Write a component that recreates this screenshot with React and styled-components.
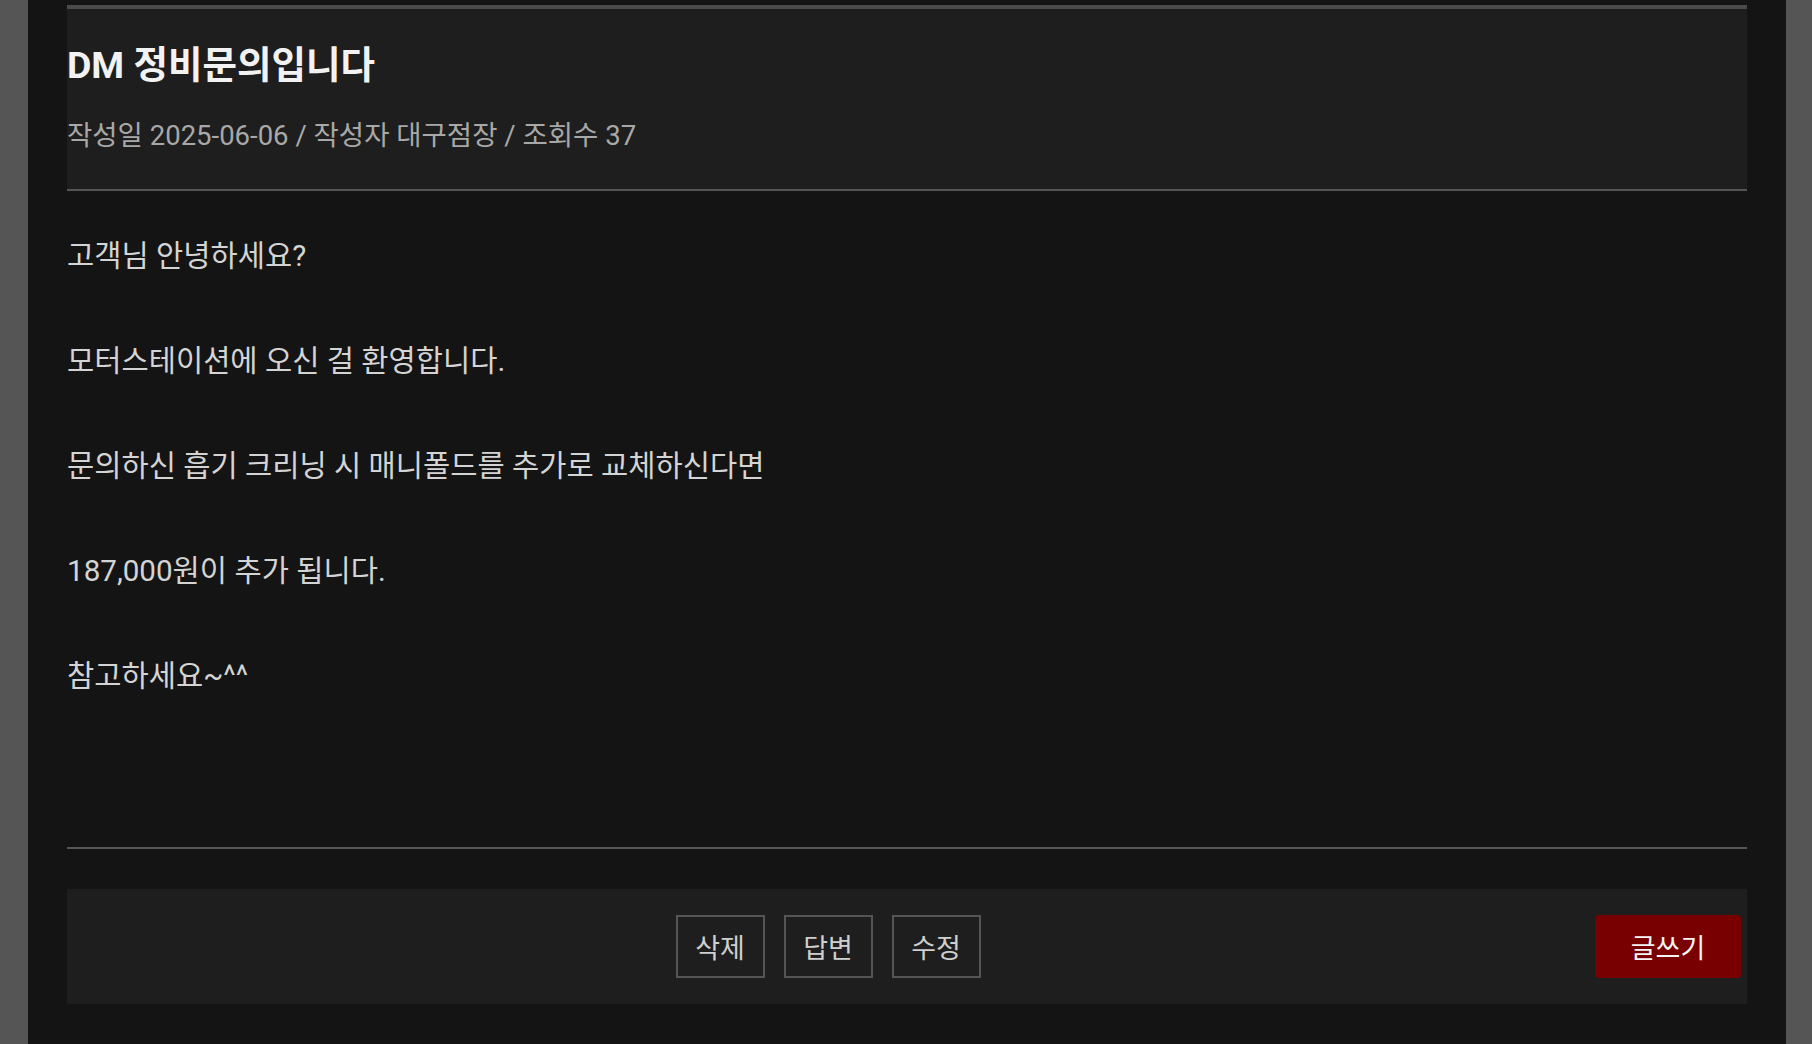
import React from "react";
import styled, { createGlobalStyle } from "styled-components";

const GlobalStyle = createGlobalStyle`
  html, body {
    margin: 0;
    padding: 0;
    background: #555555;
    height: 100%;
    overflow: hidden;
  }
  body {
    font-family: Roboto, "Noto Sans CJK KR", "Noto Sans", sans-serif;
  }
  * { box-sizing: border-box; }
`;

const Page = styled.div`
  margin: 0 26px 0 28px;
  min-height: 1044px;
  background: #141414;
  padding: 5px 39px 0 39px;
`;

const Header = styled.header`
  background: #1e1e1e;
  border-top: 4px solid #4a4a4c;
  border-bottom: 2px solid #555555;
  height: 186px;
  padding-top: 32px;
`;

const Title = styled.h1`
  margin: 0;
  font-size: 37.5px;
  font-weight: 700;
  line-height: 48px;
  color: #f2f2f2;
`;

const Meta = styled.div`
  margin-top: 29px;
  font-size: 27.5px;
  line-height: 36px;
  color: #a8a8a8;
`;

const Content = styled.section`
  display: flex;
  flex-direction: column;
  padding: 10px 0 0;
  height: 658px;
  border-bottom: 2px solid #555555;
`;

const Para = styled.p`
  margin: 0;
  height: 105px;
  display: flex;
  align-items: center;
  font-size: 29.6px;
  color: #d4d4d4;
`;

const Bar = styled.div`
  margin-top: 40px;
  height: 115px;
  background: #1e1e1e;
  display: flex;
  align-items: center;
  padding: 0 6px 0 0;
`;

const Group = styled.div`
  flex: 1;
  display: flex;
  justify-content: center;
  gap: 19px;
  margin-right: 6px;
`;

const OutlineButton = styled.button`
  width: 89px;
  height: 63px;
  background: transparent;
  border: 2px solid #555555;
  color: #cfcfcf;
  font-family: inherit;
  font-size: 27px;
  padding: 0;
  cursor: pointer;
`;

const WriteButton = styled.button`
  width: 146px;
  height: 63px;
  background: #780000;
  border: none;
  border-radius: 4px;
  color: #f4f4f4;
  font-family: inherit;
  font-size: 27px;
  padding: 0;
  cursor: pointer;
`;

const lines = [
  "고객님 안녕하세요?",
  "모터스테이션에 오신 걸 환영합니다.",
  "문의하신 흡기 크리닝 시 매니폴드를 추가로 교체하신다면",
  "187,000원이 추가 됩니다.",
  "참고하세요~^^",
];

export default function App() {
  return (
    <>
      <GlobalStyle />
      <Page>
        <Header>
          <Title>DM 정비문의입니다</Title>
          <Meta>작성일 2025-06-06 / 작성자 대구점장 / 조회수 37</Meta>
        </Header>
        <Content>
          {lines.map((l) => (
            <Para key={l}>{l}</Para>
          ))}
        </Content>
        <Bar>
          <Group>
            <OutlineButton>삭제</OutlineButton>
            <OutlineButton>답변</OutlineButton>
            <OutlineButton>수정</OutlineButton>
          </Group>
          <WriteButton>글쓰기</WriteButton>
        </Bar>
      </Page>
    </>
  );
}
